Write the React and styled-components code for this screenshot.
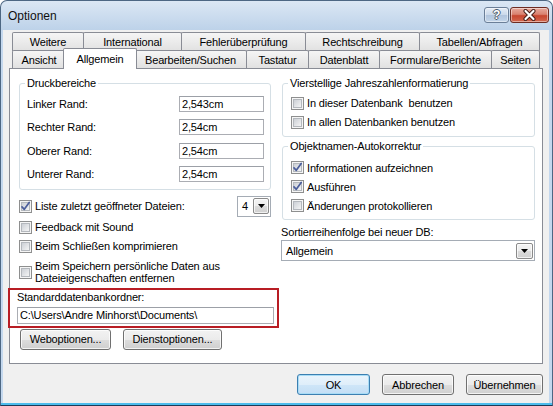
import React from 'react';
import styled, { createGlobalStyle, css } from 'styled-components';

const GlobalStyle = createGlobalStyle`
  html,
  body {
    margin: 0;
    padding: 0;
    background: #ffffff;
  }
  body {
    font-family: "Liberation Sans", Arial, sans-serif;
    font-size: 11px;
    letter-spacing: -0.15px;
    color: #000;
  }
  #root {
    width: 553px;
    height: 406px;
  }
`;

const backTabs = [
	{ label: 'Weitere', width: 72 },
	{ label: 'International', width: 99 },
	{ label: 'Fehlerüberprüfung', width: 125 },
	{ label: 'Rechtschreibung', width: 115 },
	{ label: 'Tabellen/Abfragen', width: 121 },
];

const frontTabs = [
	{ label: 'Ansicht', width: 54 },
	{ label: 'Allgemein', width: 74, active: true },
	{ label: 'Bearbeiten/Suchen', width: 113 },
	{ label: 'Tastatur', width: 63 },
	{ label: 'Datenblatt', width: 72 },
	{ label: 'Formulare/Berichte', width: 113 },
	{ label: 'Seiten', width: 49 },
];

const margins = [
	{ id: 'links', label: 'Linker Rand:', value: '2,543cm' },
	{ id: 'rechts', label: 'Rechter Rand:', value: '2,54cm' },
	{ id: 'oben', label: 'Oberer Rand:', value: '2,54cm' },
	{ id: 'unten', label: 'Unterer Rand:', value: '2,54cm' },
];

const CheckIcon = ({ checked }) => (
	<svg width="13" height="13" viewBox="0 0 13 13" style={{ flex: 'none' }}>
		<defs>
			<linearGradient id="cbFill" x1="0" y1="0" x2="1" y2="1">
				<stop offset="0" stopColor="#c9cdd3" />
				<stop offset="1" stopColor="#f7f7f7" />
			</linearGradient>
		</defs>
		<rect x="0.5" y="0.5" width="12" height="12" fill="#f5f5f5" stroke="#8e8f8f" />
		<rect x="2.5" y="2.5" width="8" height="8" fill="url(#cbFill)" stroke="#b4b8bd" />
		{checked && (
			<path
				d="M3 6.8 L5.3 9.3 L10.2 2.4"
				fill="none"
				stroke="#4b5e9b"
				strokeWidth="1.7"
				strokeLinejoin="round"
				strokeLinecap="round"
			/>
		)}
	</svg>
);

const Arrow = () => (
	<svg width="7" height="4" viewBox="0 0 7 4">
		<path d="M0 0h7L3.5 4z" fill="#000" />
	</svg>
);

const Check = ({ checked, children }) => (
	<CheckRow>
		<CheckIcon checked={checked} />
		<CheckText>{children}</CheckText>
	</CheckRow>
);

const App = () => {
	return (
		<>
			<GlobalStyle />
			<Window>
				<TitleBar>
					<Title>Optionen</Title>
					<Caption>
						<HelpButton>?</HelpButton>
						<CloseButton>
							<svg width="15" height="12" viewBox="0 0 15 12">
								<path
									d="M3.5 2 L11.5 10 M11.5 2 L3.5 10"
									stroke="#3f1a14"
									strokeWidth="4"
									strokeLinecap="round"
								/>
								<path
									d="M3.5 2 L11.5 10 M11.5 2 L3.5 10"
									stroke="#ffffff"
									strokeWidth="2.2"
									strokeLinecap="round"
								/>
							</svg>
						</CloseButton>
					</Caption>
				</TitleBar>

				<Client>
					<TabStrip>
						<TabRow>
							{backTabs.map((tab) => (
								<Tab key={tab.label} $w={tab.width} $back>
									{tab.label}
								</Tab>
							))}
						</TabRow>
						<TabRow $front>
							{frontTabs.map((tab) => (
								<Tab key={tab.label} $w={tab.width} $active={tab.active}>
									{tab.label}
								</Tab>
							))}
						</TabRow>
					</TabStrip>

					<Panel>
						<Column>
							<Group $pad="6px 6px 7px 7px">
								<Legend>Druckbereiche</Legend>
								<FieldGrid>
									{margins.map((m) => (
										<FieldRow key={m.id}>
											<span>{m.label}</span>
											<TextBox $w={85} readOnly value={m.value} />
										</FieldRow>
									))}
								</FieldGrid>
							</Group>

							<ListRow>
								<Check checked>Liste zuletzt geöffneter Dateien:</Check>
								<Combo $w={34} $h={21}>
									<span>4</span>
									<DropButton $w={16}>
										<Arrow />
									</DropButton>
								</Combo>
							</ListRow>

							<CheckList>
								<Check>Feedback mit Sound</Check>
								<Check>Beim Schließen komprimieren</Check>
							</CheckList>

							<TallCheck>
								<CheckIcon />
								<CheckText $tall>
									Beim Speichern persönliche Daten aus
									<br />
									Dateieigenschaften entfernen
								</CheckText>
							</TallCheck>

							<Highlight>
								<span>Standarddatenbankordner:</span>
								<TextBox $h={17} readOnly value="C:\Users\Andre Minhorst\Documents\" />
							</Highlight>

							<ButtonRow $start>
								<Button $w={91}>Weboptionen...</Button>
								<Button $w={99}>Dienstoptionen...</Button>
							</ButtonRow>
						</Column>

						<Column>
							<Group $pad="3.5px 6px 4px 8px">
								<Legend $shift={-3}>Vierstellige Jahreszahlenformatierung</Legend>
								<Check>In dieser Datenbank&nbsp; benutzen</Check>
								<Check>In allen Datenbanken benutzen</Check>
							</Group>

							<Group $pad="5px 6px 4px 8px" $gap={3.5}>
								<Legend $shift={-3}>Objektnamen-Autokorrektur</Legend>
								<Check checked>Informationen aufzeichnen</Check>
								<Check checked>Ausführen</Check>
								<Check>Änderungen protokollieren</Check>
							</Group>

							<SortLabel>Sortierreihenfolge bei neuer DB:</SortLabel>
							<Combo $w={254} $h={21} $shift>
								<span>Allgemein</span>
								<DropButton $w={17}>
									<Arrow />
								</DropButton>
							</Combo>
						</Column>
					</Panel>

					<ButtonRow>
						<Button $w={73} $default>
							OK
						</Button>
						<Button $w={72}>Abbrechen</Button>
						<Button $w={77}>Übernehmen</Button>
					</ButtonRow>
				</Client>
			</Window>
		</>
	);
};

const Window = styled.div`
  box-sizing: border-box;
  width: 553px;
  height: 406px;
  display: flex;
  flex-direction: column;
  padding: 0 3px 2px 2px;
  border: 1px solid #4d6783;
  border-bottom-color: #1c3a58;
  border-radius: 7px 7px 0 0;
  background: linear-gradient(
    to bottom,
    #dbe7f4 0px,
    #bdd2e9 29px,
    #c4d8ee 29px,
    #c4d8ee calc(100% - 2px),
    #4cbcec calc(100% - 2px)
  );
`;

const TitleBar = styled.div`
  flex: none;
  height: 29px;
  display: flex;
  align-items: center;
  padding-left: 5px;
`;

const Title = styled.span`
  font-size: 12px;
  letter-spacing: 0;
  color: #101010;
`;

const Caption = styled.div`
  margin-left: auto;
  align-self: flex-start;
  margin-top: 6px;
  display: flex;
  gap: 1px;
`;

const captionButton = css`
  box-sizing: border-box;
  height: 16px;
  border-radius: 3px;
  display: grid;
  place-items: center;
  box-shadow: inset 0 0 0 1px rgba(255, 255, 255, 0.45);
`;

const HelpButton = styled.span`
  ${captionButton}
  width: 25px;
  border: 1px solid #6b7f98;
  background: linear-gradient(#e5edf6 0%, #cbd9ea 48%, #b1c5dd 52%, #c3d5e9 100%);
  font-weight: bold;
  font-size: 12px;
  line-height: 1;
  color: #ffffff;
  text-shadow: 1px 0 0 #4f5b6b, -1px 0 0 #4f5b6b, 0 1px 0 #4f5b6b, 0 -1px 0 #4f5b6b;
`;

const CloseButton = styled.span`
  ${captionButton}
  width: 39px;
  border: 1px solid #6e2c22;
  background: linear-gradient(#e7ab9d 0%, #d98270 45%, #c7462f 55%, #d2684f 100%);
`;

const Client = styled.div`
  flex: 1;
  display: flex;
  flex-direction: column;
  padding: 2px 6px 0 6px;
  background: #f0f0f0;
`;

const TabStrip = styled.div`
  margin-left: 3px;
  display: flex;
  flex-direction: column;
`;

const TabRow = styled.div`
  display: flex;
  align-items: flex-start;
  ${(p) =>
		p.$front &&
		css`
      margin-top: -1px;
    `}
`;

const Tab = styled.div`
  box-sizing: border-box;
  flex: none;
  width: ${(p) => p.$w}px;
  height: ${(p) => (p.$back ? 19 : 18)}px;
  margin-right: -1px;
  display: flex;
  align-items: center;
  justify-content: center;
  white-space: nowrap;
  border: 1px solid #898c95;
  border-bottom: none;
  border-radius: 2px 2px 0 0;
  background: linear-gradient(#f5f5f5, #e1e1e1);
  ${(p) =>
		p.$active &&
		css`
      position: relative;
      z-index: 1;
      height: 21px;
      margin: -2px -3px -1px -2px;
      background: #ffffff;
    `}
`;

const Panel = styled.div`
  box-sizing: border-box;
  height: 296px;
  display: grid;
  grid-template-columns: 252px 253px;
  column-gap: 11px;
  align-items: start;
  padding: 8px 7px 0 9px;
  border: 1px solid #898c95;
  background: #ffffff;
`;

const Column = styled.div`
  display: flex;
  flex-direction: column;
`;

const Group = styled.fieldset`
  margin: 0;
  min-width: 0;
  padding: ${(p) => p.$pad};
  border: 1px solid #d5dfe5;
  border-radius: 3px;
  & + & {
    margin-top: ${(p) => p.$gap || 0}px;
  }
`;

const Legend = styled.legend`
  padding: 0 2px;
  margin-left: ${(p) => p.$shift || -2}px;
  line-height: 13px;
`;

const FieldGrid = styled.div`
  display: grid;
  row-gap: 7.3px;
`;

const FieldRow = styled.div`
  height: 16px;
  display: flex;
  align-items: center;
  justify-content: space-between;
`;

const TextBox = styled.input`
  box-sizing: border-box;
  width: ${(p) => (p.$w ? `${p.$w}px` : '100%')};
  height: ${(p) => p.$h || 16}px;
  margin: 0;
  padding: 0 2px;
  border: 1px solid #abadb3;
  border-top-color: #9ca0a7;
  border-radius: 0;
  background: #ffffff;
  font: inherit;
  letter-spacing: inherit;
  color: #000;
  outline: none;
`;

const CheckRow = styled.div`
  height: 19px;
  display: flex;
  align-items: center;
  gap: 3px;
`;

const CheckText = styled.span`
  white-space: nowrap;
  line-height: ${(p) => (p.$tall ? 12.5 : 12)}px;
`;

const ListRow = styled.div`
  margin-top: 6px;
  height: 21px;
  display: flex;
  align-items: center;
  justify-content: space-between;
`;

const CheckList = styled.div`
  margin-top: 1px;
  display: flex;
  flex-direction: column;
`;

const TallCheck = styled(CheckRow)`
  height: 25px;
  margin-top: 4px;
`;

const Combo = styled.div`
  box-sizing: border-box;
  width: ${(p) => p.$w}px;
  height: ${(p) => p.$h}px;
  display: flex;
  align-items: center;
  justify-content: space-between;
  padding: 0 1px 0 4px;
  border: 1px solid #a5acb5;
  background: #ffffff;
  ${(p) =>
		p.$shift &&
		css`
      margin-left: -1px;
      margin-top: 1px;
    `}
`;

const DropButton = styled.span`
  box-sizing: border-box;
  width: ${(p) => p.$w}px;
  height: 16px;
  display: grid;
  place-items: center;
  border: 1px solid #8a8a8a;
  border-radius: 2px;
  background: linear-gradient(#f4f4f4 0%, #ececec 50%, #dcdcdc 51%, #cfcfcf 100%);
  box-shadow: inset 0 0 0 1px rgba(255, 255, 255, 0.7);
`;

const Highlight = styled.div`
  margin: 3px -8px 0 -11px;
  padding: 1px 3px 2px 7px;
  display: flex;
  flex-direction: column;
  gap: 3px;
  border: 2px solid #b81d24;
  line-height: 13px;
`;

const SortLabel = styled.span`
  margin: 6px 0 0 -1px;
  line-height: 13px;
`;

const ButtonRow = styled.div`
  display: flex;
  gap: 12px;
  ${(p) =>
		p.$start
			? css`
          margin: 1px 0 0 1px;
        `
			: css`
          justify-content: flex-end;
          margin-top: 10px;
        `}
`;

const Button = styled.button`
  box-sizing: border-box;
  width: ${(p) => p.$w}px;
  height: 21px;
  padding: 0;
  font-family: inherit;
  font-size: 11px;
  letter-spacing: inherit;
  color: #000;
  border-radius: 3px;
  border: 1px solid ${(p) => (p.$default ? '#3c7fb1' : '#707070')};
  background: ${(p) =>
		p.$default
			? 'linear-gradient(#eaf4fc 0%, #dfeefa 50%, #cfe6f8 51%, #c3def5 100%)'
			: 'linear-gradient(#f2f2f2 0%, #ebebeb 50%, #dddddd 51%, #cfcfcf 100%)'};
  box-shadow: inset 0 0 0 1px ${(p) => (p.$default ? '#a8dcf6' : 'rgba(255, 255, 255, 0.75)')};
`;

export default App;
